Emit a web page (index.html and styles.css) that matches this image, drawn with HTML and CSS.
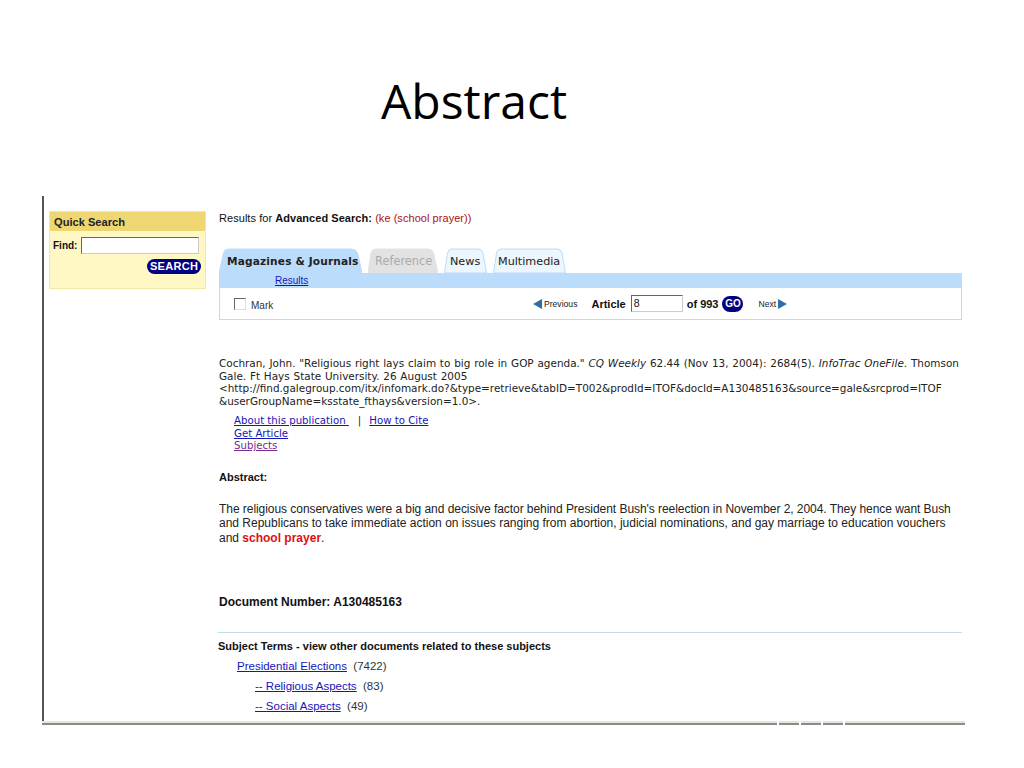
FILE: index.html
```html
<!DOCTYPE html>
<html lang="en">
<head>
<meta charset="utf-8">
<title>Abstract</title>
<link rel="stylesheet" href="styles.css">
</head>
<body>
<h1 class="slide-title">Abstract</h1>
<div class="shot">
  <aside class="side">
    <div class="qs">
      <div class="qs-head">Quick Search</div>
      <div class="qs-find"><span>Find:</span><span class="qs-input"></span></div>
      <div class="qs-btn-row"><span class="pill">SEARCH</span></div>
    </div>
  </aside>
  <main class="main">
    <p class="results">Results for <b>Advanced Search:</b> <span class="red">(ke (school prayer))</span></p>
    <div class="tabs">
      <div class="tab tab-on">
        <svg class="tab-shape" viewBox="0 0 143 25"><path d="M0 25 4.500 5Q5.500 1 10 1H132Q137 1 138.500 5L143 25Z"/></svg>
        <span class="tab-label">Magazines &amp; Journals</span>
      </div>
      <div class="tab tab-off">
        <svg class="tab-shape" viewBox="0 0 70 25"><path d="M0 25 3 5Q4 1 8 1H60Q64 1 65.500 5L70 25Z"/></svg>
        <span class="tab-label">Reference</span>
      </div>
      <div class="tab tab-news">
        <svg class="tab-shape" viewBox="0 0 43 25"><path d="M.5 25 3.500 5Q4.500 1 8 1H34Q38 1 39 5L42.500 25Z"/></svg>
        <span class="tab-label">News</span>
      </div>
      <div class="tab tab-multi">
        <svg class="tab-shape" viewBox="0 0 73 25"><path d="M.5 25 3.500 5Q4.500 1 8 1H64Q68 1 69 5L72.500 25Z"/></svg>
        <span class="tab-label">Multimedia</span>
      </div>
    </div>
    <div class="tabbar"><a class="link results-link">Results</a></div>
    <div class="toolrow">
      <div class="mark"><span class="check"></span><span class="mark-text">Mark</span></div>
      <div class="pager">
        <svg class="arrow" viewBox="0 0 9 10"><path d="M0 5 9 0V10Z"/></svg>
        <span class="pg-small pg-prev">Previous</span>
        <b class="pg-article">Article</b>
        <span class="pg-input">8</span>
        <b class="pg-of">of 993</b>
        <span class="go">GO</span>
        <span class="pg-small pg-next">Next</span>
        <svg class="arrow" viewBox="0 0 9 10"><path d="M9 5 0 0V10Z"/></svg>
      </div>
    </div>
    <p class="cite">Cochran, John. "Religious right lays claim to big role in GOP agenda." <i>CQ Weekly</i> 62.44 (Nov 13, 2004): 2684(5). <i>InfoTrac OneFile</i>. Thomson<br>Gale. Ft Hays State University. 26 August 2005<br>&lt;http://find.galegroup.com/itx/infomark.do?&amp;type=retrieve&amp;tabID=T002&amp;prodId=ITOF&amp;docId=A130485163&amp;source=gale&amp;srcprod=ITOF<br>&amp;userGroupName=ksstate_fthays&amp;version=1.0&gt;.</p>
    <div class="cite-links">
      <div><a class="link">About this publication&nbsp;</a><span class="sep">|</span><a class="link">How to Cite</a></div>
      <div><a class="link">Get Article</a></div>
      <div><a class="link visited">Subjects</a></div>
    </div>
    <h2 class="abs-head">Abstract:</h2>
    <p class="abs"><span class="tight">The religious conservatives were a big and decisive factor behind President Bush's reelection in November 2, 2004. They hence want Bush</span><br>and Republicans to take immediate action on issues ranging from abortion, judicial nominations, and gay marriage to education vouchers<br>and <b class="hit">school prayer</b>.</p>
    <p class="docnum">Document Number: A130485163</p>
    <div class="terms">
      <p class="terms-head">Subject Terms - view other documents related to these subjects</p>
      <p class="term"><a class="link">Presidential Elections</a>&nbsp; (7422)</p>
      <p class="term sub"><a class="link">-- Religious Aspects</a>&nbsp; (83)</p>
      <p class="term sub"><a class="link">-- Social Aspects</a>&nbsp; (49)</p>
    </div>
  </main>
</div>
<div class="shot-bottom">
  <span class="seg seg-main"></span>
  <span class="seg seg-s"></span>
  <span class="seg seg-s"></span>
  <span class="seg seg-s"></span>
  <span class="seg seg-end"></span>
</div>
</body>
</html>
```

FILE: styles.css
```css
* { box-sizing: border-box; }
html, body { margin: 0; padding: 0; background: #fff; }
body { width: 1024px; height: 768px; overflow: hidden; font-family: "Liberation Sans", Arial, sans-serif; color: #111; }
p, h1, h2 { margin: 0; }

.slide-title { height: 196px; padding: 69px 0 0 381px; font-family: "Open Sans", sans-serif; font-weight: 400; font-size: 48px; line-height: 64px; color: #000; }

.shot { display: flex; width: 923px; height: 525px; margin-left: 42px; border-left: 2px solid #555; overflow: hidden; }
.shot-bottom { display: flex; gap: 2px; width: 923px; height: 4px; margin-left: 42px; }
.seg { display: block; height: 4px; background: #e8e4de; border-bottom: 2px solid #8a8a86; }
.seg-main { width: 735px; }
.seg-s { width: 20px; }
.seg-end { width: 120px; }

.side { width: 175px; flex: none; padding: 15px 0 0 5px; }
.qs { width: 157px; height: 78px; background: #fff7c4; border: 1px solid #f2e7a4; }
.qs-head { height: 19px; background: #eed673; padding-left: 4px; font-size: 11.100px; font-weight: 700; line-height: 21px; color: #222; }
.qs-find { display: flex; align-items: center; gap: 4px; padding: 6px 0 0 3px; font-size: 10px; font-weight: 700; }
.qs-input { width: 118px; height: 17px; background: #fff; border: 1px solid #666; border-right-color: #ccc; border-bottom-color: #ccc; }
.qs-btn-row { display: flex; justify-content: flex-end; padding: 5px 4px 0 0; }
.pill { display: block; width: 54px; height: 15px; border-radius: 8px; background: #000080; color: #fff; font-size: 11px; font-weight: 700; line-height: 15px; text-align: center; letter-spacing: .3px; }

.main { width: 743px; flex: none; padding-top: 15px; }
.results { height: 37px; font-size: 11px; letter-spacing: .05px; line-height: 14px; }
.red { color: #b01010; }

.tabs { display: flex; gap: 6px; height: 25px; }
.tab { position: relative; height: 25px; padding-top: 6px; font-family: "DejaVu Sans", sans-serif; font-size: 11.200px; line-height: 15px; color: #222; white-space: nowrap; }
.tab-shape { position: absolute; left: 0; top: 0; width: 100%; height: 25px; fill: #edf5fd; stroke: #bbdcfb; stroke-width: 1; }
.tab-label { position: relative; }
.tab-on { width: 143px; padding-left: 8px; font-weight: 700; font-size: 10.600px; letter-spacing: .15px; }
.tab-on .tab-shape { fill: #bbdcfb; }
.tab-off { width: 70px; padding-left: 7px; color: #aaa; font-size: 11.400px; }
.tab-off .tab-shape { fill: #e2e2e2; stroke: #e2e2e2; }
.tab-news { width: 43px; padding-left: 6px; }
.tab-multi { width: 73px; padding-left: 5px; }

.tabbar { height: 15px; background: #bbdcfb; font-size: 10px; line-height: 15px; padding-left: 56px; }
.link { color: #1616b8; text-decoration: underline; }
.visited { color: #7a2a90; }

.toolrow { display: flex; align-items: center; height: 32px; border: 1px solid #bfdcef; border-top: 0; padding-left: 14px; font-size: 10px; }
.mark { display: flex; align-items: center; gap: 5px; width: 299px; color: #333; }
.mark-text { padding-top: 3px; }
.check { width: 12px; height: 12px; background: #fff; border: 1px solid #666; border-right-color: #ddd; border-bottom-color: #ddd; }
.pager { display: flex; align-items: center; }
.arrow { width: 9px; height: 10px; fill: #2e6ea6; }
.pg-small { font-size: 8.600px; color: #222; }
.pg-prev { margin-left: 2px; }
.pg-article { margin-left: 14px; font-size: 11px; }
.pg-input { width: 52px; height: 17px; margin: 0 4px 0 5px; padding-left: 2px; background: #fff; border: 1px solid #666; border-right-color: #ccc; border-bottom-color: #ccc; font-size: 10.500px; line-height: 15px; }
.pg-of { font-size: 11px; }
.go { width: 21px; height: 16px; margin-left: 4px; border-radius: 8px; background: #000080; color: #fff; font-size: 10px; font-weight: 700; line-height: 16px; text-align: center; }
.pg-next { margin: 0 2px 0 15px; }

.cite { margin-top: 37px; font-family: "DejaVu Sans", sans-serif; font-size: 10.450px; word-spacing: .5px; line-height: 12.500px; white-space: nowrap; color: #222; }
.cite-links { margin: 8px 0 0 15px; font-family: "DejaVu Sans", sans-serif; font-size: 10.200px; line-height: 12.500px; color: #222; }
.sep { margin: 0 8px 0 9px; }

.abs-head { margin-top: 17px; font-size: 11px; font-weight: 700; line-height: 14px; color: #111; }
.abs { margin-top: 18px; font-size: 12px; line-height: 14.500px; white-space: nowrap; color: #222; }
.tight { letter-spacing: -.05px; }
.hit { color: #e01010; }
.docnum { margin-top: 50px; font-size: 12px; font-weight: 700; line-height: 14px; }

.terms { margin: 23px 0 0 -1px; border-top: 1px solid #bfdcef; padding-top: 6px; }
.terms-head { font-size: 11px; font-weight: 700; line-height: 14px; }
.term { margin-top: 6px; padding-left: 19px; line-height: 14px; color: #333; font-size: 11.500px; }
.sub { padding-left: 37px; }
```
